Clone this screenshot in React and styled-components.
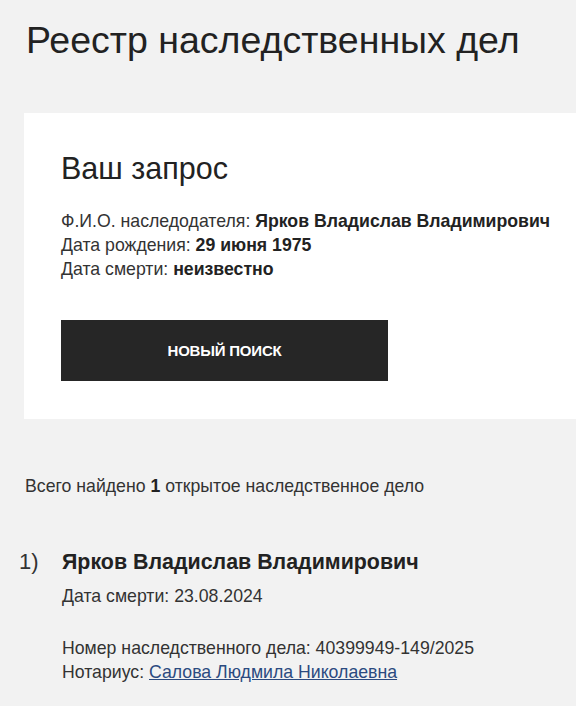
import React from "react";
import styled, { createGlobalStyle } from "styled-components";

const Global = createGlobalStyle`
  html, body {
    margin: 0;
    padding: 0;
    background: #f2f2f2;
    font-family: "Liberation Sans", Arial, Helvetica, sans-serif;
    color: #222;
  }
  body { overflow: hidden; }
`;

const Page = styled.div`
  display: flex;
  flex-direction: column;
  padding: 18px 0 0 0;
`;

const Title = styled.h1`
  margin: 0 0 51px 26px;
  font-size: 37.5px;
  line-height: 44px;
  font-weight: 400;
  color: #222;
  white-space: nowrap;
`;

const Card = styled.section`
  margin-left: 24px;
  background: #fff;
  padding: 39px 0 38px 37px;
  display: flex;
  flex-direction: column;
  align-items: flex-start;
`;

const CardTitle = styled.h2`
  margin: 0 0 24px 0;
  font-size: 30.5px;
  line-height: 33px;
  font-weight: 400;
  color: #222;
`;

const InfoList = styled.div`
  display: flex;
  flex-direction: column;
`;

const Line = styled.div`
  font-size: 17.7px;
  line-height: 24px;
  color: #333;
  white-space: nowrap;
`;

const Strong = styled.b`
  font-weight: 700;
  color: #222;
`;

const Button = styled.button`
  margin-top: 39px;
  width: 327px;
  height: 61px;
  border: 0;
  background: #262626;
  color: #fff;
  font-family: "Liberation Sans", Arial, sans-serif;
  font-size: 15px;
  font-weight: 700;
  text-transform: uppercase;
  letter-spacing: -0.2px;
  cursor: pointer;
`;

const Summary = styled.p`
  margin: 55px 0 0 25px;
  font-size: 17.7px;
  line-height: 24px;
  color: #333;
`;

const Result = styled.div`
  display: grid;
  grid-template-columns: 43px 1fr;
  margin: 50px 0 0 19px;
`;

const Num = styled.div`
  font-size: 22px;
  line-height: 28px;
  color: #333;
`;

const ResultBody = styled.div`
  display: flex;
  flex-direction: column;
`;

const Name = styled.div`
  font-size: 21.4px;
  line-height: 28px;
  font-weight: 700;
  color: #222;
`;

const Detail = styled.div`
  font-size: 17.7px;
  line-height: 24px;
  color: #333;
  white-space: nowrap;
  margin-top: ${(p) => p.$gap || 0}px;
`;

const Link = styled.a`
  color: #2b4a80;
  text-decoration: underline;
`;

export default function App() {
  return (
    <>
      <Global />
      <Page>
        <Title>Реестр наследственных дел</Title>
        <Card>
          <CardTitle>Ваш запрос</CardTitle>
          <InfoList>
            <Line>
              Ф.И.О. наследодателя: <Strong>Ярков Владислав Владимирович</Strong>
            </Line>
            <Line>
              Дата рождения: <Strong>29 июня 1975</Strong>
            </Line>
            <Line>
              Дата смерти: <Strong>неизвестно</Strong>
            </Line>
          </InfoList>
          <Button>Новый поиск</Button>
        </Card>
        <Summary>
          Всего найдено <Strong>1</Strong> открытое наследственное дело
        </Summary>
        <Result>
          <Num>1)</Num>
          <ResultBody>
            <Name>Ярков Владислав Владимирович</Name>
            <Detail $gap={8}>Дата смерти: 23.08.2024</Detail>
            <Detail $gap={28}>Номер наследственного дела: 40399949-149/2025</Detail>
            <Detail>
              Нотариус: <Link href="#">Салова Людмила Николаевна</Link>
            </Detail>
          </ResultBody>
        </Result>
      </Page>
    </>
  );
}
